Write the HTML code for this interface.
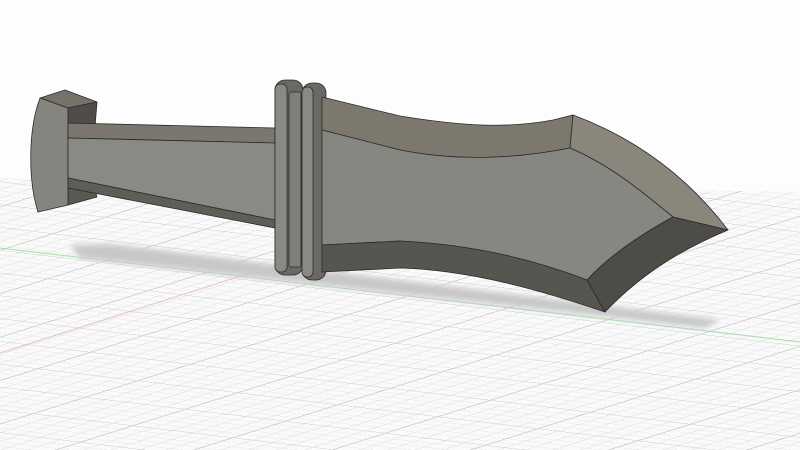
<!DOCTYPE html>
<html><head><meta charset="utf-8"><style>html,body{margin:0;padding:0;background:#fff}svg{display:block}</style></head>
<body>
<svg width="800" height="450" viewBox="0 0 800 450" xmlns="http://www.w3.org/2000/svg">
<defs>
<pattern id="minor" width="10" height="10" patternUnits="userSpaceOnUse" patternTransform="matrix(2 0.24 -1.05 0.33 0 250)">
<path d="M0 0H10M0 0V10" stroke="#dedede" stroke-width="1.2" fill="none"/>
</pattern>
<pattern id="major" width="50" height="50" patternUnits="userSpaceOnUse" patternTransform="matrix(2 0.24 -1.05 0.33 0 250)">
<path d="M0 0H50M0 0V50" stroke="#c4c4c4" stroke-width="1.6" fill="none"/>
</pattern>
<clipPath id="gc"><polygon points="0,178 800,192 800,450 0,450"/></clipPath>
<filter id="bl"><feGaussianBlur stdDeviation="3"/></filter>
</defs>
<rect width="800" height="450" fill="#fdfdfd"/>
<g clip-path="url(#gc)">
<rect width="800" height="450" fill="#fafafa"/>
<rect width="800" height="450" fill="url(#minor)"/>
<rect width="800" height="450" fill="url(#major)"/>
<line x1="0" y1="248" x2="800" y2="342" stroke="#a8dca8" stroke-width="1"/>
<line x1="0" y1="353" x2="250" y2="273" stroke="#e8c0c0" stroke-width="1"/>
</g>
<polygon points="70,245 110,244 720,320 705,328 80,258" fill="#c8c8c8" filter="url(#bl)"/>
<g stroke="#2a2a2a" stroke-width="0.8" stroke-linejoin="round">
<polygon points="40,98 65,90 97,102 68,108" fill="#777269"/>
<path d="M68,108 L97,102 L95,127 L68,127Z" fill="#4f4d49"/>
<path d="M68,180 L95,190 L97,197 L68,205Z" fill="#5a5853"/>
<path d="M40,98 L68,108 L68,205 L38,212 C28,180 28,130 40,98Z" fill="#85847f"/>
<polygon points="68,123 275,128 275,143 68,138" fill="#7b776e"/>
<polygon points="68,138 275,143 275,220 68,178" fill="#8a8a85"/>
<polygon points="68,178 275,220 275,228 68,188" fill="#5f5d58"/>
<rect x="275" y="80" width="28" height="195" rx="10" fill="#6a6964"/>
<rect x="275" y="84" width="12" height="188" rx="5" fill="#8a8a85"/>
<rect x="289" y="92" width="12" height="175" rx="2" fill="#7f7f7a"/>
<rect x="302" y="83" width="24" height="197" rx="10" fill="#6a6964"/>
<rect x="302" y="87" width="11" height="190" rx="5" fill="#8a8a85"/>
<path d="M322,97 L400,116 C450,124 500,130 553,120 L573,115 L570,148 C520,158 460,162 400,150 L322,130Z" fill="#7d786e"/>
<path d="M573,115 C640,140 690,180 728,230 L673,217 C640,190 610,165 570,148Z" fill="#8a867c"/>
<path d="M322,130 L400,150 C460,162 520,158 570,148 C610,165 640,190 673,217 C640,235 610,255 587,280 C540,262 480,245 400,241 L322,245Z" fill="#878782"/>
<path d="M322,245 L400,241 C480,245 540,262 587,280 L605,312 C540,290 470,270 400,268 L322,272Z" fill="#57554f"/>
<path d="M587,280 C610,255 640,235 673,217 L728,230 C680,250 640,275 605,312Z" fill="#4e4c47"/>
</g>
</svg>
</body></html>
